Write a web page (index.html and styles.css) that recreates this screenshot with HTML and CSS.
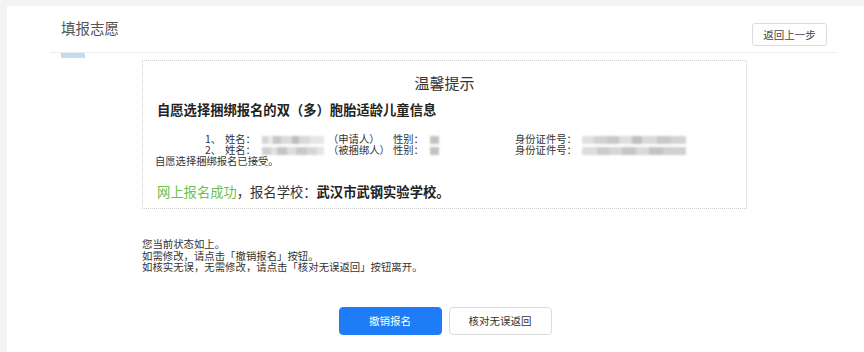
FILE: index.html
```html
<!DOCTYPE html>
<html lang="zh-CN">
<head>
<meta charset="utf-8">
<title>填报志愿</title>
<link rel="stylesheet" href="styles.css">
</head>
<body>
<div class="page">
  <div class="header">
    <div class="header-bar">
      <div class="title">填报志愿</div>
      <button class="btn-back">返回上一步</button>
    </div>
    <div class="tab-mark"></div>
  </div>

  <div class="content">
    <div class="notice">
      <div class="notice-title">温馨提示</div>
      <div class="notice-sub">自愿选择捆绑报名的双（多）胞胎适龄儿童信息</div>
      <div class="rows">
        <div class="row">
          <span></span>
          <span>1、</span>
          <span>姓名：</span>
          <span><i class="blur blur-name"></i></span>
          <span>（申请人）</span>
          <span>性别：</span>
          <span><i class="blur blur-sex"></i></span>
          <span>身份证件号：</span>
          <span><i class="blur blur-id"></i></span>
        </div>
        <div class="row">
          <span></span>
          <span>2、</span>
          <span>姓名：</span>
          <span><i class="blur blur-name b2"></i></span>
          <span>（被捆绑人）</span>
          <span>性别：</span>
          <span><i class="blur blur-sex"></i></span>
          <span>身份证件号：</span>
          <span><i class="blur blur-id b2"></i></span>
        </div>
        <div class="accepted">自愿选择捆绑报名已接受。</div>
      </div>
      <div class="success"><span class="ok">网上报名成功</span>，报名学校：<b>武汉市武钢实验学校。</b></div>
    </div>

    <div class="status">
      <div>您当前状态如上。</div>
      <div>如需修改，请点击「撤销报名」按钮。</div>
      <div>如核实无误，无需修改，请点击「核对无误返回」按钮离开。</div>
    </div>

    <div class="actions">
      <button class="btn btn-primary">撤销报名</button>
      <button class="btn btn-default">核对无误返回</button>
    </div>
  </div>
</div>
</body>
</html>
```

FILE: styles.css
```css
html, body {
  margin: 0;
  padding: 0;
}
body {
  background: #f3f3f3;
  font-family: "Noto Sans CJK SC", "Noto Sans", sans-serif;
  color: #333;
  width: 864px;
  height: 352px;
  overflow: hidden;
}
.page {
  margin: 6px 0 0 7px;
  background: #fff;
  height: 346px;
}
.header {
  margin-left: 43px;
  width: 787px;
}
.header-bar {
  display: flex;
  justify-content: space-between;
  align-items: flex-start;
  height: 46px;
  border-bottom: 1px solid #ececec;
}
.title {
  padding: 13px 0 0 11px;
  font-size: 14.5px;
  line-height: 18px;
  color: #555;
}
.btn-back {
  margin: 17px 10px 0 0;
  width: 75px;
  height: 23px;
  padding: 0;
  border: 1px solid #dcdcdc;
  border-radius: 3px;
  background: #fff;
  font-family: inherit;
  font-size: 10.5px;
  color: #444;
}
.tab-mark {
  margin-left: 11px;
  width: 24px;
  height: 5px;
  background: #c8d9f3;
}
.content {
  margin: 2px 0 0 135px;
  width: 605px;
}
.notice {
  border: 1px dotted #cfcfcf;
  padding: 13px 0 7px 14px;
}
.notice-title {
  text-align: center;
  padding-right: 14px;
  font-size: 15px;
  line-height: 18px;
  color: #333;
}
.notice-sub {
  margin-top: 9px;
  font-size: 13.3px;
  line-height: 18px;
  font-weight: bold;
  color: #222;
}
.rows {
  margin-top: 14px;
  font-size: 10.3px;
  line-height: 11px;
  color: #333;
}
.row {
  display: grid;
  grid-template-columns: 48px 20px 37px 66px 65px 37px 85px 67px 105px;
  align-items: center;
}
.row span {
  white-space: nowrap;
}
.blur {
  display: inline-block;
  height: 8px;
  vertical-align: middle;
  filter: blur(1px);
}
.blur-name {
  width: 62px;
  background: linear-gradient(90deg, #d4d4d4 0 10%, #e8e8e8 10% 18%, #c6c6c6 18% 30%, #dadada 30% 48%, #bdbdbd 48% 60%, #d8d8d8 60% 78%, #e6e6e6 78% 100%);
}
.blur-name.b2 {
  background: linear-gradient(90deg, #cfcfcf 0 14%, #e2e2e2 14% 24%, #c4c4c4 24% 40%, #dedede 40% 55%, #c9c9c9 55% 72%, #d6d6d6 72% 88%, #e4e4e4 88% 100%);
}
.blur-sex {
  width: 9px;
  background: #c2c2c2;
}
.blur-id {
  width: 104px;
  background: linear-gradient(90deg, #e0e0e0 0 12%, #d2d2d2 12% 24%, #c8c8c8 24% 36%, #dedede 36% 48%, #bfbfbf 48% 58%, #d9d9d9 58% 72%, #c9c9c9 72% 86%, #d4d4d4 86% 100%);
}
.blur-id.b2 {
  background: linear-gradient(90deg, #dcdcdc 0 14%, #cbcbcb 14% 26%, #d6d6d6 26% 38%, #c6c6c6 38% 52%, #d9d9d9 52% 64%, #c4c4c4 64% 78%, #d0d0d0 78% 100%);
}
.accepted {
  margin-left: -2px;
}
.success {
  margin-top: 17px;
  font-size: 13.3px;
  line-height: 18px;
  color: #333;
}
.success .ok {
  color: #6cc04a;
}
.success b {
  color: #222;
}
.status {
  margin-top: 29px;
  font-size: 10.4px;
  line-height: 11.5px;
  color: #333;
}
.actions {
  margin-top: 34px;
  display: flex;
  justify-content: center;
  gap: 7px;
  padding-left: 1px;
}
.btn {
  width: 103px;
  height: 28px;
  padding: 0;
  border-radius: 4px;
  font-family: inherit;
  font-size: 10.5px;
}
.btn-primary {
  background: #1e7cf6;
  border: 1px solid #1e7cf6;
  color: #fff;
}
.btn-default {
  background: #fff;
  border: 1px solid #dcdcdc;
  color: #333;
}
```
